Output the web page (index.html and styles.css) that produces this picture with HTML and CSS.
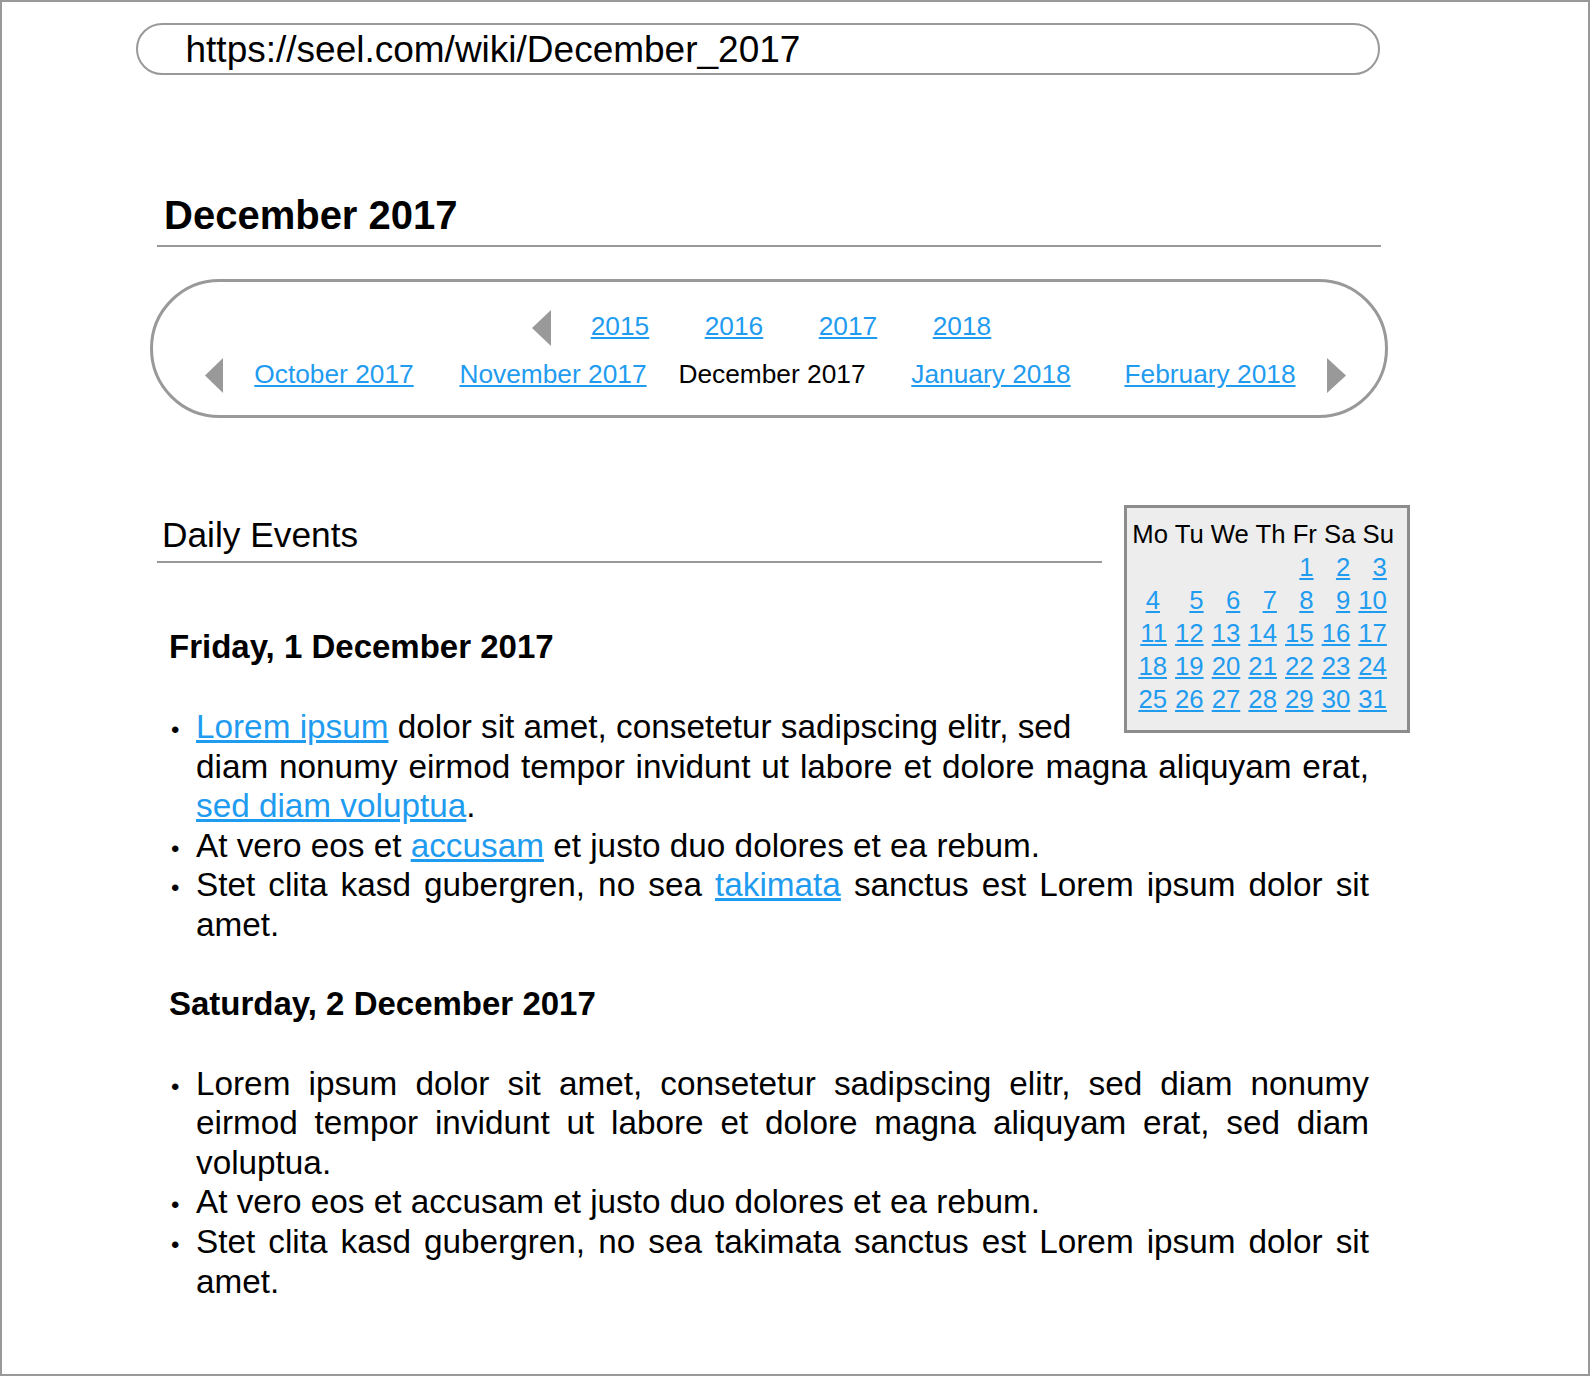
FILE: index.html
```html
<!DOCTYPE html>
<html lang="en">
<head>
<meta charset="utf-8">
<title>December 2017</title>
<link rel="stylesheet" href="styles.css">
</head>
<body>
<div class="frame">
  <div class="url">https://seel.com/wiki/December_2017</div>
  <div class="main">
    <h1 class="title">December 2017</h1>
    <nav class="nav">
      <div class="years">
        <svg class="tri" width="19" height="36" viewBox="0 0 19 36"><polygon points="19,0 19,36 0,18"/></svg>
        <div class="ycells">
          <a class="ycell" href="#">2015</a>
          <a class="ycell" href="#">2016</a>
          <a class="ycell" href="#">2017</a>
          <a class="ycell" href="#">2018</a>
        </div>
      </div>
      <div class="months">
        <svg class="tri" width="18" height="35" viewBox="0 0 18 35"><polygon points="18,0 18,35 0,17.5"/></svg>
        <div class="mcells">
          <a class="mcell" href="#">October 2017</a>
          <a class="mcell" href="#">November 2017</a>
          <span class="mcell current">December 2017</span>
          <a class="mcell" href="#">January 2018</a>
          <a class="mcell" href="#">February 2018</a>
        </div>
        <svg class="tri tri-right" width="19" height="35" viewBox="0 0 19 35"><polygon points="0,0 0,35 19,17.5"/></svg>
      </div>
    </nav>

    <section class="events">
      <div class="cal">
        <div class="cal-head">Mo Tu We Th Fr Sa Su</div>
        <div class="cal-grid">
          <span></span><span></span><span></span><span></span>
          <a href="#">1</a><a href="#">2</a><a href="#">3</a>
          <span class="first"><a href="#">4</a></span><a href="#">5</a><a href="#">6</a><a href="#">7</a><a href="#">8</a><a href="#">9</a><a href="#">10</a>
          <a href="#">11</a><a href="#">12</a><a href="#">13</a><a href="#">14</a><a href="#">15</a><a href="#">16</a><a href="#">17</a>
          <a href="#">18</a><a href="#">19</a><a href="#">20</a><a href="#">21</a><a href="#">22</a><a href="#">23</a><a href="#">24</a>
          <a href="#">25</a><a href="#">26</a><a href="#">27</a><a href="#">28</a><a href="#">29</a><a href="#">30</a><a href="#">31</a>
        </div>
      </div>

      <h2 class="section-title">Daily Events</h2>

      <h3 class="day">Friday, 1 December 2017</h3>
      <ul class="items">
        <li><a href="#">Lorem ipsum</a> dolor sit amet, consetetur sadipscing elitr, sed<br>diam nonumy eirmod tempor invidunt ut labore et dolore magna aliquyam erat, <a href="#">sed diam voluptua</a>.</li>
        <li>At vero eos et <a href="#">accusam</a> et justo duo dolores et ea rebum.</li>
        <li>Stet clita kasd gubergren, no sea <a href="#">takimata</a> sanctus est Lorem ipsum dolor sit amet.</li>
      </ul>

      <h3 class="day">Saturday, 2 December 2017</h3>
      <ul class="items">
        <li>Lorem ipsum dolor sit amet, consetetur sadipscing elitr, sed diam nonumy eirmod tempor invidunt ut labore et dolore magna aliquyam erat, sed diam voluptua.</li>
        <li>At vero eos et accusam et justo duo dolores et ea rebum.</li>
        <li>Stet clita kasd gubergren, no sea takimata sanctus est Lorem ipsum dolor sit amet.</li>
      </ul>
    </section>
  </div>
</div>
</body>
</html>
```

FILE: styles.css
```css
html, body {
  margin: 0;
  padding: 0;
  overflow: hidden;
}

body {
  font-family: "Liberation Sans", Arial, Helvetica, sans-serif;
  color: #000;
  background: #fff;
}

a {
  color: #1f9cf0;
  text-decoration: underline;
}

.frame {
  width: 1590px;
  height: 1376px;
  box-sizing: border-box;
  border: 2px solid #999;
}

.url {
  margin: 21px 0 0 134px;
  width: 1244px;
  height: 52px;
  box-sizing: border-box;
  border: 2px solid #999;
  border-radius: 26px;
  padding-left: 47.5px;
  font-size: 37px;
  line-height: 49px;
  white-space: nowrap;
}

.main {
  margin-left: 148px;
  width: 1262px;
}

.title {
  margin: 116px 0 0 7px;
  width: 1224px;
  box-sizing: border-box;
  padding: 0 0 5.5px 7px;
  border-bottom: 2px solid #999;
  font-size: 40px;
  font-weight: bold;
  line-height: 48px;
}

.nav {
  margin-top: 32px;
  width: 1238px;
  box-sizing: border-box;
  border: 3px solid #999;
  border-radius: 70px;
  padding: 28px 0 21px;
  font-size: 26.3px;
  line-height: 32px;
}

.tri {
  display: block;
  fill: #999;
  flex: none;
}

.years {
  display: flex;
  align-items: flex-start;
  height: 36px;
  margin-left: 379px;
}

.ycells {
  display: flex;
  margin-left: 12px;
}

.ycell {
  width: 114px;
  text-align: center;
}

.months {
  display: flex;
  align-items: flex-start;
  height: 36px;
  margin-top: 12px;
  padding-left: 52px;
}

.mcells {
  display: flex;
  margin-left: 1.5px;
}

.mcell {
  width: 219px;
  text-align: center;
  white-space: nowrap;
}

.current {
  color: #000;
}

.tri-right {
  margin-left: 7.5px;
}

.events {
  display: flow-root;
  margin: 87px 0 0 7px;
  width: 1253px;
}

.cal {
  float: right;
  margin-left: 22px;
  width: 286px;
  box-sizing: border-box;
  border: 3px solid #8c8c8c;
  background: #ededed;
  padding: 9px 20px 14px 3.3px;
  font-size: 25.7px;
}

.cal-head {
  padding-left: 2px;
  line-height: 34px;
  white-space: nowrap;
}

.cal-grid {
  display: grid;
  grid-template-columns: repeat(7, 36.67px);
  line-height: 33px;
  text-align: right;
}

.cal-grid .first {
  padding-right: 7px;
}

.section-title {
  overflow: hidden;
  margin: 9px 0 64.6px;
  padding: 0 0 5px 5px;
  border-bottom: 2px solid #999;
  font-size: 35.3px;
  font-weight: normal;
  line-height: 42px;
}

.day {
  margin: 39px 0 0 12px;
  font-size: 33px;
  font-weight: bold;
  line-height: 40px;
}

.items {
  list-style: none;
  margin: 40px 41px 0 0;
  padding-left: 39px;
  font-size: 33.3px;
  line-height: 39.6px;
  text-align: justify;
}

.items li::before {
  content: "•";
  display: inline-block;
  width: 25px;
  margin-left: -25px;
  font-size: 24px;
  line-height: 16px;
  text-align: left;
}
```
